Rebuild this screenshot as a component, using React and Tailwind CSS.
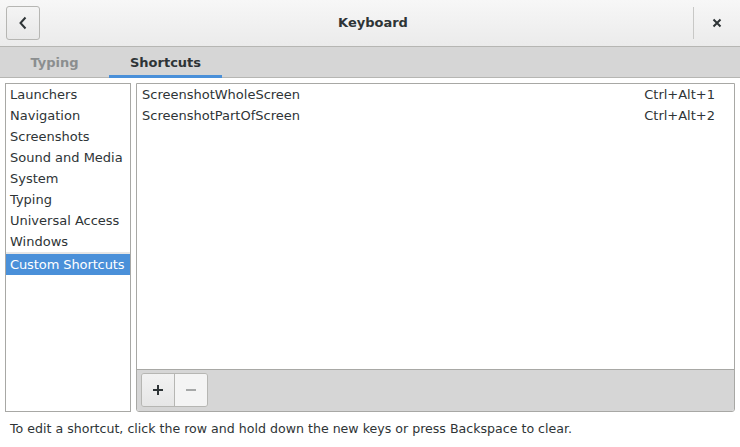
import React from 'react'

const categories = [
  'Launchers',
  'Navigation',
  'Screenshots',
  'Sound and Media',
  'System',
  'Typing',
  'Universal Access',
  'Windows',
]

const shortcuts = [
  { name: 'ScreenshotWholeScreen', keys: 'Ctrl+Alt+1' },
  { name: 'ScreenshotPartOfScreen', keys: 'Ctrl+Alt+2' },
]

const App = () => {
  return (
    <div
      className="w-[740px] h-[447px] flex flex-col bg-white text-[#2e3436] overflow-hidden"
      style={{ fontFamily: '"DejaVu Sans", sans-serif' }}
    >
      {/* header bar */}
      <div className="h-[47px] flex items-center pl-[6px] border-b border-[#b6b6b3] bg-gradient-to-b from-[#f7f7f7] to-[#ebebeb]">
        <button className="w-[34px] h-[34px] flex items-center justify-center rounded-[3px] border border-[#b6b6b3] bg-gradient-to-b from-[#f4f4f4] to-[#e8e8e8]">
          <svg width="10" height="14" viewBox="0 0 10 14">
            <path d="M7.5 1.5 L2.5 7 L7.5 12.5" fill="none" stroke="#2e3436" strokeWidth="2" />
          </svg>
        </button>
        <div className="flex-1 text-center text-[13px] font-bold pl-[13px]">Keyboard</div>
        <div className="w-px h-[32px] bg-[#c8c8c6]" />
        <div className="w-[46px] flex items-center justify-center">
          <svg width="10" height="10" viewBox="0 0 10 10">
            <path d="M1.5 1.5 L8.5 8.5 M8.5 1.5 L1.5 8.5" stroke="#2e3436" strokeWidth="2" />
          </svg>
        </div>
      </div>

      {/* tabs */}
      <div className="h-[31px] flex bg-[#d6d6d6] border-b border-[#b6b6b3]">
        <div className="w-[109px] flex items-center justify-center text-[13px] font-bold text-[#8b8e8f] pt-[2px]">
          Typing
        </div>
        <div className="w-[113px] flex items-center justify-center text-[13px] font-bold text-[#2e3436] border-b-[3px] border-[#4a90d9] mb-[-1px] pt-[3px]">
          Shortcuts
        </div>
      </div>

      {/* main */}
      <div className="flex gap-[5px] px-[5px] pt-[5px] h-[334px]">
        <div className="w-[126px] border border-[#a8a8a5] bg-white flex flex-col">
          {categories.map((c) => (
            <div key={c} className="h-[21px] flex items-center px-[4px] text-[13px] whitespace-nowrap">
              {c}
            </div>
          ))}
          <div className="h-[2px] bg-[#e6e6e6]" />
          <div className="h-[21px] flex items-center pl-[4px] text-[13px] whitespace-nowrap tracking-[-0.1px] bg-[#4a90d9] text-white overflow-hidden">
            Custom Shortcuts
          </div>
        </div>

        <div className="flex-1 flex flex-col border border-[#a8a8a5] rounded-b-[3px] overflow-hidden">
          <div className="flex-1 bg-white">
            {shortcuts.map((s) => (
              <div key={s.name} className="h-[21px] flex items-center justify-between pl-[5px] pr-[19px] text-[13px]">
                <span>{s.name}</span>
                <span>{s.keys}</span>
              </div>
            ))}
          </div>
          <div className="h-[42px] flex items-center pl-[4px] pb-[1px] bg-[#d6d6d6] border-t border-[#a8a8a5]">
            <div className="flex h-[34px] rounded-[3px] border border-[#b6b6b3] overflow-hidden">
              <button className="w-[33px] flex items-center justify-center bg-gradient-to-b from-[#f2f2f2] to-[#e6e6e6] border-r border-[#b6b6b3]">
                <svg width="12" height="12" viewBox="0 0 12 12">
                  <path d="M6 1 V11 M1 6 H11" stroke="#2e3436" strokeWidth="2" />
                </svg>
              </button>
              <button className="w-[32px] flex items-center justify-center bg-[#f4f4f4]">
                <svg width="12" height="12" viewBox="0 0 12 12">
                  <path d="M1 6 H11" stroke="#a6a8a8" strokeWidth="2" />
                </svg>
              </button>
            </div>
          </div>
        </div>
      </div>

      {/* footer */}
      <div className="flex-1 flex items-center px-[10px] text-[12.6px] whitespace-nowrap">
        To edit a shortcut, click the row and hold down the new keys or press Backspace to clear.
      </div>
    </div>
  )
}

export default App
